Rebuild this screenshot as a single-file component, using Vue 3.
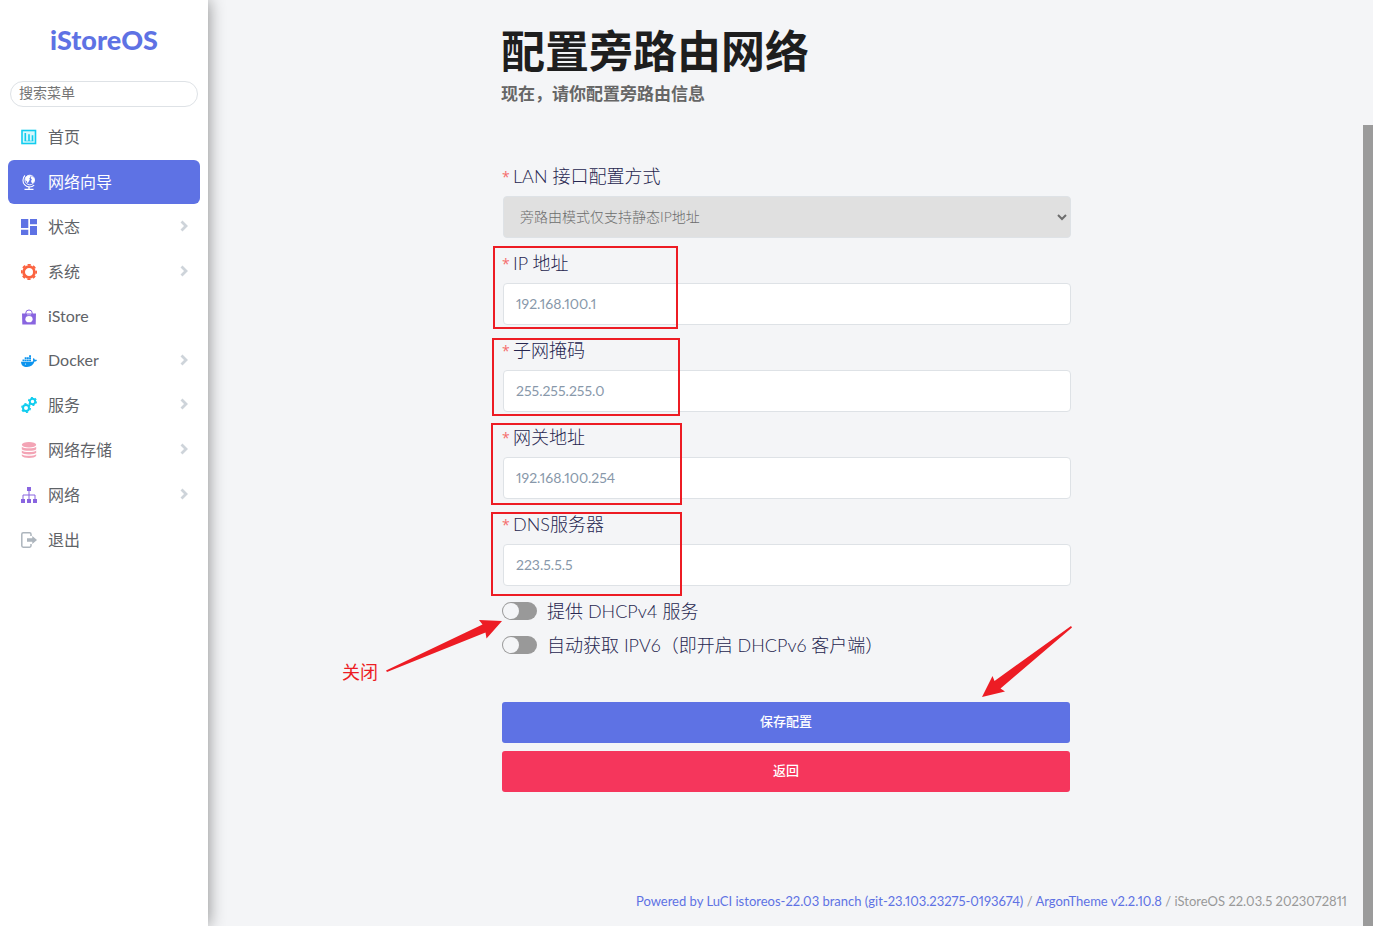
<template>
  <div class="layout">
    <aside class="sidebar">
      <a class="brand" href="#">iStoreOS</a>
      <input v-model="keyword" class="menu-search" type="search" placeholder="搜索菜单" aria-label="搜索菜单" />

      <nav>
        <ul class="menu">
          <li
            v-for="item in menu"
            :key="item.id"
            class="menu-item"
            :class="{ 'menu-item--latin': item.latin }"
          >
            <a href="#" class="menu-link" :class="{ 'menu-link--active': item.id === active }" @click.prevent="active = item.id">
              <svg class="menu-icon" :class="`icon--${item.id}`" viewBox="0 0 16 16" aria-hidden="true">
                <g v-if="item.id === 'home'">
                  <rect x="1" y="1.500" width="13.500" height="13" fill="#d8f8fd" stroke="currentColor" stroke-width="1.600" />
                  <path d="M4.300 4v8M8 5.200V12M11.500 6.300V12" stroke="currentColor" stroke-width="1.600" fill="none" />
                  <path d="M3.500 12h9" stroke="currentColor" stroke-width=".6" />
                </g>
                <g v-else-if="item.id === 'guide'">
                  <circle cx="8.800" cy="6" r="4.800" fill="none" stroke="currentColor" stroke-width=".9" />
                  <path d="M4.300 4C5.500 1.600 8 1 9.800 1.400L9.300 3.400 8.300 4.200 8.900 5.600 7.600 7.800 6.600 9.600 5.800 7.200 4.200 6z" fill="currentColor" />
                  <path d="M10.300 2 13 4 13.400 7 12 9.300 10.600 8.800 10 7 10.900 5.500 9.800 4.200z" fill="currentColor" />
                  <path d="M4 1.500a6.600 6.600 0 0 0 9.200 9.600" fill="none" stroke="currentColor" stroke-width="1.100" />
                  <path d="M8 12.500v2.500M3.500 15.300h9" stroke="currentColor" stroke-width="1.300" />
                </g>
                <path v-else-if="item.id === 'status'" d="M0 0h7.300v9H0zM9 0h7v5.200H9zM0 10.800h7.300V16H0zM9 7h7v9H9z" fill="currentColor" />
                <g v-else-if="item.id === 'system'" fill="none" stroke="currentColor">
                  <circle cx="8" cy="8" r="5.400" stroke-width="2.800" />
                  <circle cx="8" cy="8" r="7.200" stroke-width="1.700" stroke-dasharray="3.200 2.455" stroke-dashoffset="1.600" />
                </g>
                <g v-else-if="item.id === 'istore'">
                  <path d="M4.800 5V4a3.200 3 0 0 1 6.400 0v1" fill="none" stroke="currentColor" stroke-width="1" />
                  <path d="M1 4.500h14L14.700 15.600H1.300z" fill="currentColor" />
                  <ellipse cx="8" cy="10.200" rx="3.600" ry="3.100" fill="#fff" />
                  <path d="M6 5.300h4v1H6z" fill="#fff" opacity=".5" />
                </g>
                <g v-else-if="item.id === 'docker'" fill="currentColor">
                  <path d="M1.500 6.400h1.900v1.900H1.500zM3.700 6.400h1.900v1.900H3.700zM5.900 6.400h1.900v1.900H5.900zM8.100 6.400H10v1.900H8.100zM3.700 4.300h1.900v1.800H3.700zM5.900 4.300h1.900v1.800H5.900zM8.100 4.300H10v1.800H8.100zM8.100 2.200H10V4H8.100z" />
                  <path d="M0 8.700h10.800c.9 0 1.400-.3 1.500-.8-.6-.9-.4-2.100.2-2.900.8.500 1.200 1.100 1.300 1.800.7-.2 1.500-.1 2.200.3-.4 1.100-1.200 1.500-2.500 1.500C12.400 12.100 9.900 14 6 14 2.200 14 .2 12 0 8.700z" />
                  <circle cx="4.500" cy="11" r=".6" fill="#fff" />
                </g>
                <g v-else-if="item.id === 'services'" fill="none" stroke="currentColor">
                  <circle cx="5" cy="11" r="3" stroke-width="2" />
                  <circle cx="5" cy="11" r="4.300" stroke-width="1.400" stroke-dasharray="2.200 2.303" />
                  <circle cx="11.500" cy="4.400" r="2.700" stroke-width="1.900" />
                  <circle cx="11.500" cy="4.400" r="3.900" stroke-width="1.300" stroke-dasharray="2 2.084" />
                </g>
                <g v-else-if="item.id === 'nas'">
                  <ellipse cx="8" cy="2.800" rx="7.200" ry="2.800" fill="currentColor" />
                  <path d="M.8 4.800c2 2 12.400 2 14.400 0v2.400c-1.400 2.200-13 2.200-14.400 0zM.8 8.600c2 2 12.400 2 14.400 0v2.200c-1.400 2.200-13 2.200-14.400 0zM.8 12.200c2 2 12.400 2 14.400 0v1.500c-1.400 3-13 3-14.400 0z" fill="currentColor" />
                </g>
                <g v-else-if="item.id === 'network'">
                  <path d="M6 0h4v4H6zM0 12h4v4H0zM6 12h4v4H6zM12 12h4v4h-4z" fill="currentColor" />
                  <path d="M8 4v8M2 12V8h12v4" fill="none" stroke="currentColor" stroke-width="1" />
                </g>
                <g v-else>
                  <path d="M10 4V2.200Q10 .8 8.600.8H2.200Q.8.800.8 2.200v11.600q0 1.400 1.400 1.400h6.400q1.400 0 1.400-1.400V12" fill="none" stroke="currentColor" stroke-width="1.500" />
                  <path d="M6 6.300h5.300V4L16 8l-4.700 4V9.700H6z" fill="currentColor" />
                </g>
              </svg>
              <span class="menu-label">{{ item.label }}</span>
              <svg v-if="item.children" class="menu-arrow" viewBox="0 0 8 12" aria-hidden="true">
                <path d="M1.500 1.500 6 6 1.500 10.500" fill="none" stroke="currentColor" stroke-width="2.800" />
              </svg>
            </a>
          </li>
        </ul>
      </nav>
    </aside>

    <main class="main">
      <form class="wizard" @submit.prevent>
        <h1 class="wizard-title">配置旁路由网络</h1>
        <p class="wizard-subtitle">现在，请你配置旁路由信息</p>

        <div class="field">
          <label for="proto" class="field-label"><span class="required">*</span>LAN 接口配置方式</label>
          <select id="proto" class="field-control" disabled>
            <option>旁路由模式仅支持静态IP地址</option>
          </select>
        </div>

        <div v-for="f in fields" :key="f.id" class="field">
          <label :for="f.id" class="field-label"><span class="required">*</span>{{ f.label }}</label>
          <input :id="f.id" v-model="form[f.id]" class="field-control" type="text" :placeholder="f.placeholder" />
        </div>

        <div class="switches">
          <label class="switch-row">
            <input v-model="form.dhcp" type="checkbox" class="switch" />
            提供 DHCPv4 服务
          </label>
          <label class="switch-row">
            <input v-model="form.dhcp6c" type="checkbox" class="switch" />
            自动获取 IPV6（即开启 DHCPv6 客户端）
          </label>
        </div>

        <div class="actions">
          <button type="submit" class="btn btn-save">保存配置</button>
          <button type="button" class="btn btn-back">返回</button>
        </div>

        <!-- Marcas rojas sobre el formulario -->
        <svg class="marks" viewBox="341 240 740 470" aria-hidden="true">
          <g fill="none" stroke="#ed1c24" stroke-width="2">
            <rect x="494" y="247" width="183" height="81" />
            <rect x="493" y="339" width="186" height="76" />
            <rect x="492" y="424" width="189" height="80" />
            <rect x="492" y="513" width="189" height="82" />
          </g>
          <g fill="#ed1c24">
            <path d="M502 621 479 620 482.500 624.500 386 670.500 387 672 485.500 632.500 486.500 638.500z" />
            <path d="M982 697 992.500 676 994.500 681 1071 626 1072 627.500 1000.500 688.500 1005 691.500z" />
          </g>
        </svg>
        <span class="mark-text">关闭</span>
      </form>

      <footer class="footer">
        <a href="#">Powered by LuCI istoreos-22.03 branch (git-23.103.23275-0193674)</a> /
        <a href="#">ArgonTheme v2.2.10.8</a> / iStoreOS 22.03.5 2023072811
      </footer>
    </main>

    <div class="scrollbar"><div class="scrollbar-thumb"></div></div>
  </div>
</template>

<script setup>
import { ref, reactive } from 'vue';

const keyword = ref('');
const active = ref('guide');

const menu = [
  { id: 'home', label: '首页' },
  { id: 'guide', label: '网络向导' },
  { id: 'status', label: '状态', children: true },
  { id: 'system', label: '系统', children: true },
  { id: 'istore', label: 'iStore', latin: true },
  { id: 'docker', label: 'Docker', latin: true, children: true },
  { id: 'services', label: '服务', children: true },
  { id: 'nas', label: '网络存储', children: true },
  { id: 'network', label: '网络', children: true },
  { id: 'logout', label: '退出' }
];

const fields = [
  { id: 'ip', label: 'IP 地址', placeholder: '192.168.100.1' },
  { id: 'mask', label: '子网掩码', placeholder: '255.255.255.0' },
  { id: 'gateway', label: '网关地址', placeholder: '192.168.100.254' },
  { id: 'dns', label: 'DNS服务器', placeholder: '223.5.5.5' }
];

const form = reactive({ ip: '', mask: '', gateway: '', dns: '', dhcp: false, dhcp6c: false });
</script>

<style>
body { margin: 0; background: #f4f5f7; }
</style>

<style scoped>
.layout { display: flex; min-height: 100vh; background: #f4f5f7; font-family: Lato, "Noto Sans CJK SC", sans-serif; font-variant-numeric: proportional-nums; }
.layout *, .layout *::before { box-sizing: border-box; }
input, select, button { font-family: inherit; font-variant-numeric: inherit; }

/* Sidebar */
.sidebar { flex: 0 0 208px; background: #fff; box-shadow: 0 0 16px rgba(0, 0, 0, .45); clip-path: inset(0 -24px 0 0); }
.brand { display: block; height: 81px; line-height: 80px; text-align: center; font-size: 27px; font-weight: 900; color: #5e72e4; text-decoration: none; }
.menu-search {
  display: block; width: calc(100% - 20px); height: 26px; margin: 0 10px 7px; padding: 0 8px 4px;
  border: 1px solid #dee2e6; border-radius: 13px; background: #fff; font-size: 14px; outline: none;
}
.menu-search::placeholder { color: #757575; }
.menu { list-style: none; margin: 0; padding: 0 8px; }
.menu-item { height: 45px; padding-top: 1px; }
.menu-item--latin { height: 44px; }
.menu-link {
  display: flex; align-items: center; height: 44px; padding: 0 12px 0 13px; border-radius: 6px;
  color: #5f6368; font-size: 16px; text-decoration: none;
}
.menu-item--latin .menu-link { height: 43px; }
.menu-link--active { background: #5e72e4; color: #fff; }
.menu-icon { width: 16px; height: 16px; margin-right: 11px; }
.menu-label { flex: 1; padding-bottom: 2px; }
.menu-arrow { width: 8px; height: 12px; margin-bottom: 2px; color: #ced4da; }

.icon--home { color: #11cdef; }
.icon--guide { color: #fff; }
.icon--status { color: #5e72e4; }
.icon--system { color: #fb6340; }
.icon--istore { color: #8965e0; }
.icon--docker { color: #0d94ee; }
.icon--services { color: #11cdef; }
.icon--nas { color: #f3a4b5; }
.icon--network { color: #8965e0; }
.icon--logout { color: #adb5bd; }

/* Main */
.main { flex: 1; display: flex; flex-direction: column; min-width: 0; }
.wizard { position: relative; width: 100%; max-width: 569px; margin: 0 auto; padding-top: 20px; }
.wizard-title { margin: 0; font-size: 44px; line-height: 62px; font-weight: 700; color: #1e1e1e; }
.wizard-subtitle { margin: 0 0 58px; font-size: 17px; line-height: 23px; font-weight: 700; color: #666; }

.field { margin-bottom: 12px; }
.field-label { display: flex; gap: 4px; margin-bottom: 6px; font-size: 18px; line-height: 27px; font-weight: 300; color: #26264f; }
.required { width: 8px; padding-left: 1px; font-family: "Open Sans", sans-serif; font-size: 14px; font-weight: 400; color: #f56c6c; }
.field-control {
  display: block; width: calc(100% - 1px); height: 42px; margin-left: 2px; padding: 0 12px 2px;
  border: 1px solid #dee2e6; border-radius: 4px; background: #fff; font-size: 14px; color: #8898aa; outline: none;
}
.field-control::placeholder { color: #8898aa; }
select.field-control { padding: 0 2px 2px 12px; background: #e0e0e0; color: #6d6d6d; font-weight: 300; opacity: 1; }

.switches { display: flex; flex-direction: column; gap: 7px; }
.switch-row { display: flex; align-items: center; font-size: 18px; line-height: 27px; font-weight: 300; color: #26264f; }
.switch { position: relative; appearance: none; width: 35px; height: 18px; margin: 0 10px 2px 1px; border-radius: 9px; background: #999; }
.switch::before { content: ''; position: absolute; left: 1px; top: 1px; width: 16px; height: 16px; border-radius: 50%; background: #f4f5f7; }
.switch:checked { background: #5e72e4; }
.switch:checked::before { left: 18px; }

.actions { display: flex; flex-direction: column; gap: 8px; margin-top: 43px; padding-left: 1px; }
.btn { height: 41px; padding: 0 0 4px; border: none; border-radius: 3px; color: #fff; font-size: 13px; font-weight: 500; cursor: pointer; }
.btn-save { background: #5e72e4; }
.btn-back { background: #f5365c; }

.marks { position: absolute; left: -160px; top: 240px; width: 740px; height: 470px; pointer-events: none; }
.mark-text { position: absolute; left: -159px; top: 659px; font-size: 18px; line-height: 27px; color: #ed1c24; }

.footer { margin-top: auto; padding: 16px; text-align: right; font-size: 13px; line-height: 18px; color: #999; }
.footer a { color: #5e72e4; text-decoration: none; }

/* Scrollbar */
.scrollbar { flex: 0 0 10px; display: flex; }
.scrollbar-thumb { flex: 1; margin-top: 125px; background: #9b9b9b; }
</style>
